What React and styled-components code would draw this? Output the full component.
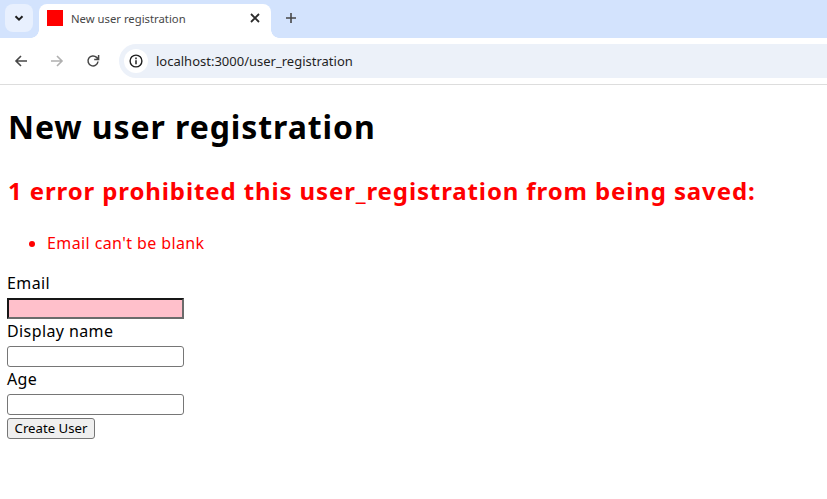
import React from "react";
import styled, { createGlobalStyle } from "styled-components";

const GlobalStyle = createGlobalStyle`
  html, body {
    margin: 0;
    padding: 0;
    background: #fff;
  }
  body {
    font-family: "Noto Sans", "Noto Sans CJK JP", sans-serif;
    color: #000;
  }
`;

const App = () => {
  return (
    <>
      <GlobalStyle />
      <Browser>
        <TabStrip>
          <TabSearch>
            <svg width="12" height="12" viewBox="0 0 12 12">
              <path d="M2.5 4.2 6 7.7l3.5-3.5" fill="none" stroke="#1f1f1f" strokeWidth="2" />
            </svg>
          </TabSearch>
          <Tab>
            <Favicon />
            <TabTitle>New user registration</TabTitle>
            <svg width="12" height="12" viewBox="0 0 12 12">
              <path d="M2 2l8 8M10 2l-8 8" fill="none" stroke="#2b2b2b" strokeWidth="1.8" />
            </svg>
          </Tab>
          <NewTab>
            <svg width="12" height="12" viewBox="0 0 12 12">
              <path d="M6 1v10M1 6h10" fill="none" stroke="#474747" strokeWidth="1.6" />
            </svg>
          </NewTab>
        </TabStrip>
        <Toolbar>
          <NavButton>
            <svg width="14" height="14" viewBox="0 0 14 14">
              <path d="M13 7H2M7 2 2 7l5 5" fill="none" stroke="#474747" strokeWidth="1.6" />
            </svg>
          </NavButton>
          <NavButton>
            <svg width="14" height="14" viewBox="0 0 14 14">
              <path d="M1 7h11M7 2l5 5-5 5" fill="none" stroke="#b0b0b0" strokeWidth="1.6" />
            </svg>
          </NavButton>
          <NavButton>
            <svg width="14" height="14" viewBox="0 0 14 14">
              <path
                d="M12 7.5A5 5 0 1 1 10.6 3.4L12.4 5.2M12.6 1v4.4H8.2"
                fill="none"
                stroke="#474747"
                strokeWidth="1.5"
              />
            </svg>
          </NavButton>
          <Omnibox>
            <InfoBadge>
              <svg width="14" height="14" viewBox="0 0 14 14">
                <circle cx="7" cy="7" r="5.9" fill="none" stroke="#1f1f1f" strokeWidth="1.4" />
                <path d="M7 6.2v4" stroke="#1f1f1f" strokeWidth="1.5" />
                <path d="M7 3.6v1.6" stroke="#1f1f1f" strokeWidth="1.5" />
              </svg>
            </InfoBadge>
            <Url>localhost:3000/user_registration</Url>
          </Omnibox>
        </Toolbar>
      </Browser>

      <Page>
        <Title>New user registration</Title>
        <ErrorBox>
          <ErrorTitle>1 error prohibited this user_registration from being saved:</ErrorTitle>
          <ErrorList>
            <li>Email can't be blank</li>
          </ErrorList>
        </ErrorBox>
        <form onSubmit={(e) => e.preventDefault()}>
          <Field>
            <FieldLabel>Email</FieldLabel>
            <TextInput $error />
          </Field>
          <Field>
            <FieldLabel>Display name</FieldLabel>
            <TextInput />
          </Field>
          <Field>
            <FieldLabel>Age</FieldLabel>
            <TextInput />
          </Field>
          <SubmitButton type="submit">Create User</SubmitButton>
        </form>
      </Page>
    </>
  );
};

export default App;

const Browser = styled.div`
  display: flex;
  flex-direction: column;
`;

const TabStrip = styled.div`
  display: flex;
  align-items: flex-end;
  height: 38px;
  background: #d3e3fd;
  padding-left: 5px;
`;

const TabSearch = styled.div`
  display: flex;
  align-items: center;
  justify-content: center;
  width: 28px;
  height: 28px;
  margin-bottom: 6px;
  border-radius: 8px;
  background: #e8f0fe;
`;

const Tab = styled.div`
  position: relative;
  display: flex;
  align-items: center;
  box-sizing: border-box;
  width: 232px;
  height: 34px;
  margin-left: 6px;
  padding: 0 10px 6px 8px;
  background: #fff;
  border-radius: 8px 8px 0 0;

  &::before,
  &::after {
    content: "";
    position: absolute;
    bottom: 0;
    width: 8px;
    height: 8px;
  }
  &::before {
    left: -8px;
    background: radial-gradient(circle at 0 0, #d3e3fd 7.5px, #fff 8px);
  }
  &::after {
    right: -8px;
    background: radial-gradient(circle at 100% 0, #d3e3fd 7.5px, #fff 8px);
  }
`;

const Favicon = styled.div`
  width: 16px;
  height: 16px;
  background: #ff0000;
  flex-shrink: 0;
`;

const TabTitle = styled.span`
  flex: 1;
  margin-left: 8px;
  font-family: "Noto Sans", "Open Sans", sans-serif;
  font-size: 11.3px;
  color: #474747;
  white-space: nowrap;
`;

const NewTab = styled.div`
  display: flex;
  align-items: center;
  justify-content: center;
  width: 28px;
  height: 28px;
  margin: 0 0 6px 6px;
`;

const Toolbar = styled.div`
  display: flex;
  align-items: center;
  box-sizing: border-box;
  height: 47px;
  padding: 0 0 1px 7px;
  background: #fff;
  border-bottom: 1px solid #dddddd;
`;

const NavButton = styled.div`
  display: flex;
  align-items: center;
  justify-content: center;
  width: 28px;
  height: 28px;
  margin-right: 8px;
`;

const Omnibox = styled.div`
  display: flex;
  align-items: center;
  flex: 1;
  height: 34px;
  margin-left: 4px;
  padding-left: 5px;
  background: #ecf1f9;
  border-radius: 17px 0 0 17px;
`;

const InfoBadge = styled.div`
  display: flex;
  align-items: center;
  justify-content: center;
  width: 24px;
  height: 24px;
  border-radius: 50%;
  background: #fff;
`;

const Url = styled.span`
  margin-left: 8px;
  font-family: "Noto Sans", "Open Sans", sans-serif;
  font-size: 13px;
  color: #1f1f1f;
`;

const Page = styled.main`
  padding: 0 7px;
`;

const Title = styled.h1`
  margin: 20px 0 0 1px;
  font-size: 32px;
  line-height: 44px;
  font-weight: 700;
  letter-spacing: 0.92px;
`;

const ErrorBox = styled.div`
  color: #ff0000;
`;

const ErrorTitle = styled.h2`
  margin: 25px 0 0 1px;
  font-size: 24px;
  line-height: 33px;
  font-weight: 700;
  white-space: nowrap;
  letter-spacing: 0.88px;
`;

const ErrorList = styled.ul`
  margin: 24px 0 0;
  padding-left: 40px;
  font-size: 16px;
  line-height: 24px;
  letter-spacing: 0.4px;
`;

const Field = styled.div`
  display: flex;
  flex-direction: column;
  align-items: flex-start;

  &:first-child {
    margin-top: 16px;
  }
`;

const FieldLabel = styled.label`
  font-size: 16px;
  line-height: 25px;
  padding-bottom: 2px;
  letter-spacing: 0.4px;
`;

const TextInput = styled.input`
  box-sizing: border-box;
  width: 177px;
  height: 21px;
  padding: 1px 2px;
  background: ${({ $error }) => ($error ? "#ffc0cb" : "#fff")};
  border-style: ${({ $error }) => ($error ? "inset" : "solid")};
  border-width: ${({ $error }) => ($error ? "2px" : "1px")};
  border-color: ${({ $error }) => ($error ? "#6b6b6b" : "#767676")};
  border-radius: ${({ $error }) => ($error ? "0" : "3px")};
`;

const SubmitButton = styled.button`
  display: block;
  box-sizing: border-box;
  width: 88px;
  height: 21px;
  margin-top: 3px;
  padding: 0 0 2px;
  font-family: "Noto Sans", Arial, sans-serif;
  font-size: 13.2px;
  color: #000;
  background: #efefef;
  border: 1px solid #767676;
  border-radius: 3px;
`;
